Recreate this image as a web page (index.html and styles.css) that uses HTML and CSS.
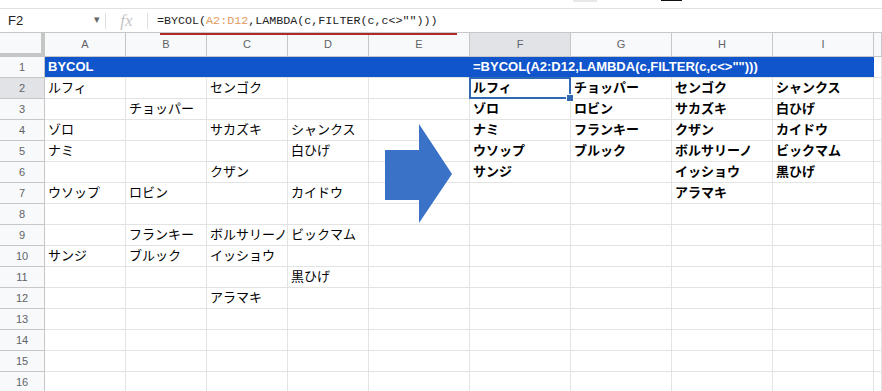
FILE: index.html
```html
<!DOCTYPE html>
<html>
    <head>
        <title>BYCOL</title>
        <link rel="stylesheet" href="styles.css">
    </head>
    <body>
    <div class="toolbar">
        <span class="tool-gray"></span>
        <span class="tool-black"></span>
    </div>
    <div class="formula-bar">
        <div class="name-box">F2<span class="drop">&#9662;</span></div>
        <span class="sep"></span>
        <span class="fx">fx</span>
        <span class="sep"></span>
        <div class="formula">=BYCOL(<span class="ref">A2:D12</span>,LAMBDA(c,FILTER(c,c&lt;&gt;"")))</div>
        <div class="underline"></div>
    </div>
    <div class="sheet" id="sheet">
        <svg class="arrow" width="68" height="100" viewBox="0 0 68 100">
            <polygon points="0,26 34,26 34,0 67,50 34,99 34,76 0,76" fill="#3a72c8"/>
        </svg>
    </div>

    <script>
        var cols = ['A','B','C','D','E','F','G','H','I'];
        var left = {
            2:  {A:'ルフィ', C:'センゴク'},
            3:  {B:'チョッパー'},
            4:  {A:'ゾロ', C:'サカズキ', D:'シャンクス'},
            5:  {A:'ナミ', D:'白ひげ'},
            6:  {C:'クザン'},
            7:  {A:'ウソップ', B:'ロビン', D:'カイドウ'},
            9:  {B:'フランキー', C:'ボルサリーノ', D:'ビックマム'},
            10: {A:'サンジ', B:'ブルック', C:'イッショウ'},
            11: {D:'黒ひげ'},
            12: {C:'アラマキ'}
        };
        var result = {
            F: ['ルフィ','ゾロ','ナミ','ウソップ','サンジ'],
            G: ['チョッパー','ロビン','フランキー','ブルック'],
            H: ['センゴク','サカズキ','クザン','ボルサリーノ','イッショウ','アラマキ'],
            I: ['シャンクス','白ひげ','カイドウ','ビックマム','黒ひげ']
        };
        var sheet = document.getElementById('sheet');

        function cell(cls, text) {
            var d = document.createElement('div');
            d.className = cls;
            if (text) d.textContent = text;
            sheet.appendChild(d);
            return d;
        }

        // header row
        cell('corner');
        for (var i = 0; i < cols.length; i++) {
            cell(cols[i] == 'F' ? 'col-head active' : 'col-head', cols[i]);
        }
        cell('col-head');

        // row 1
        cell('row-head', '1');
        cell('cell title span5', 'BYCOL');
        cell('cell title span4', '=BYCOL(A2:D12,LAMBDA(c,FILTER(c,c<>"")))');
        cell('cell');

        for (var r = 2; r <= 16; r++) {
            cell(r == 2 ? 'row-head active' : 'row-head', String(r));
            for (var j = 0; j < cols.length; j++) {
                var c = cols[j];
                var text = '';
                var cls = 'cell';
                if (left[r] && left[r][c]) text = left[r][c];
                if (result[c]) {
                    cls += ' bold';
                    if (result[c][r - 2]) text = result[c][r - 2];
                }
                if (c == 'F' && r == 2) cls += ' sel';
                cell(cls, text);
            }
            cell('cell');
        }
    </script>
    </body>
</html>
```

FILE: styles.css
```css
body {
    margin: 0;
    font-family: "Liberation Sans", "Noto Sans CJK JP", sans-serif;
    background: #fff;
    color: #000;
    overflow: hidden;
}

.toolbar {
    height: 8px;
    display: flex;
    align-items: flex-start;
}

.tool-gray {
    width: 24px;
    height: 2px;
    margin-left: 573px;
    background: #e8e8e8;
}

.tool-black {
    width: 21px;
    height: 1px;
    margin-left: 64px;
    background: #111;
}

.formula-bar {
    height: 23px;
    border-top: 1px solid #e0e0e0;
    display: flex;
    align-items: center;
    position: relative;
}

.name-box {
    width: 92px;
    padding-left: 8px;
    padding-right: 5px;
    font-size: 13px;
    color: #222;
    display: flex;
    justify-content: space-between;
}

.drop {
    color: #666;
    font-size: 11px;
}

.sep {
    width: 1px;
    height: 16px;
    background: #e0e0e0;
}

.fx {
    width: 41px;
    text-align: center;
    font-family: "Liberation Serif", serif;
    font-style: italic;
    font-size: 17px;
    color: #c4c4c4;
}

.formula {
    margin-left: 9px;
    font-family: "Liberation Mono", monospace;
    font-size: 11.7px;
    color: #222;
}

.ref {
    color: #e09a5e;
}

.underline {
    position: absolute;
    left: 160px;
    width: 297px;
    top: 24px;
    height: 2px;
    background: #b02a2a;
    z-index: 3;
}

.sheet {
    position: relative;
    display: grid;
    grid-template-columns: 45px repeat(4, 81px) repeat(5, 101px) 1fr;
    grid-template-rows: 25px;
    grid-auto-rows: 21px;
}

.corner {
    background: #f8f9fa;
    border-right: 4px solid #c4c7c5;
    border-bottom: 4px solid #c4c7c5;
    border-top: 1px solid #c7c7c7;
}

.col-head {
    background: #f8f9fa;
    border-top: 1px solid #c7c7c7;
    border-right: 1px solid #c7c7c7;
    border-bottom: 1px solid #c7c7c7;
    color: #5f6368;
    font-size: 11px;
    text-align: center;
    line-height: 23px;
}

.row-head {
    background: #f8f9fa;
    border-right: 1px solid #c7c7c7;
    border-bottom: 1px solid #c7c7c7;
    color: #5f6368;
    font-size: 11px;
    text-align: center;
    line-height: 20px;
}

.active {
    background: #e1e3e6;
}

.cell {
    border-right: 1px solid #e2e3e3;
    border-bottom: 1px solid #e2e3e3;
    padding: 0 3px;
    font-size: 13px;
    line-height: 20px;
    white-space: nowrap;
    overflow: hidden;
}

.bold {
    font-weight: bold;
}

.title {
    background: #1155cc;
    color: #fff;
    font-weight: bold;
    border-right: none;
}

.span5 {
    grid-column: span 5;
}

.span4 {
    grid-column: span 4;
}

.sel {
    position: relative;
    overflow: visible;
}

.sel::after {
    content: "";
    position: absolute;
    left: -1px;
    top: -1px;
    right: -1px;
    bottom: -1px;
    border: 2px solid #2f69b2;
}

.sel::before {
    content: "";
    position: absolute;
    right: -4px;
    bottom: -4px;
    width: 6px;
    height: 6px;
    background: #2f69b2;
    border: 1px solid #fff;
    z-index: 2;
}

.arrow {
    position: absolute;
    left: 385px;
    top: 92px;
    z-index: 2;
}
```
